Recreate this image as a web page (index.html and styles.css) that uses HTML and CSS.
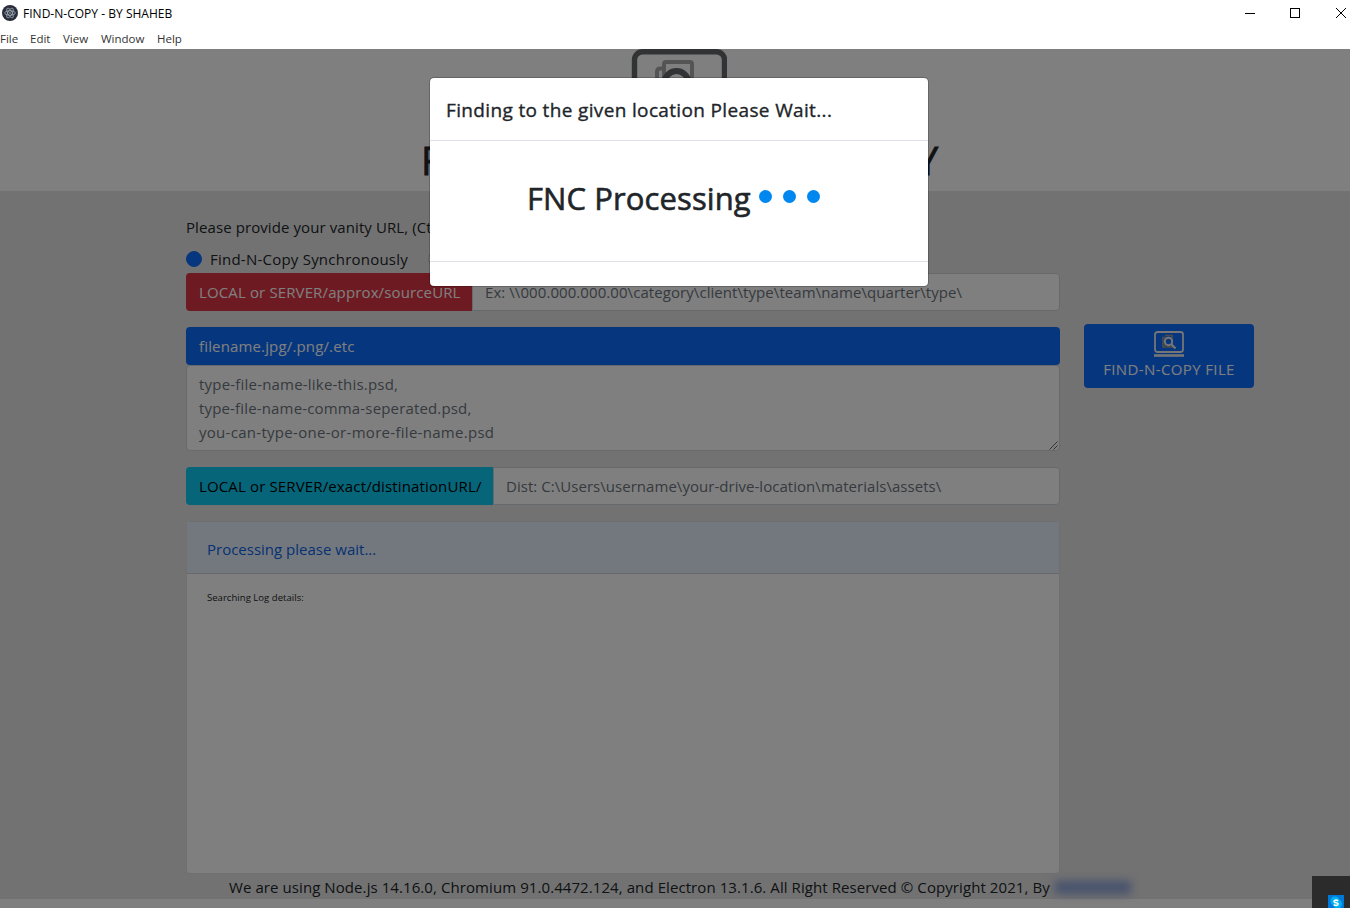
FILE: index.html
```html
<!DOCTYPE html>
<html lang="en">
<head>
<meta charset="utf-8">
<title>FIND-N-COPY - BY SHAHEB</title>
<link rel="stylesheet" href="styles.css">
</head>
<body>
<div class="window">
  <header class="titlebar">
    <svg class="app-icon" width="16" height="16" viewBox="0 0 16 16">
      <circle cx="8" cy="8" r="8" fill="#2b2e3a"/>
      <g fill="none" stroke="#c3d3dc" stroke-width=".7" opacity=".85">
        <ellipse cx="8" cy="8" rx="5.4" ry="2.2"/>
        <ellipse cx="8" cy="8" rx="5.4" ry="2.2" transform="rotate(60 8 8)"/>
        <ellipse cx="8" cy="8" rx="5.4" ry="2.2" transform="rotate(120 8 8)"/>
      </g>
      <circle cx="8" cy="8" r=".7" fill="#c3d3dc"/>
    </svg>
    <span class="app-name">FIND-N-COPY - BY SHAHEB</span>
    <svg class="controls" width="105" height="13" viewBox="0 0 105 13" fill="none" stroke="#000">
      <path d="M0 6.5H10" shape-rendering="crispEdges"/>
      <path d="M45.500 1.500H54.500V10.500H45.500Z" shape-rendering="crispEdges"/>
      <path d="M91 1L101 11M101 1L91 11"/>
    </svg>
  </header>
  <nav class="menubar"><span class="m-file">File</span><span class="m-edit">Edit</span><span class="m-view">View</span><span class="m-window">Window</span><span>Help</span></nav>

  <div class="page">
    <section class="hero">
      <svg class="logo" width="96" height="84" viewBox="0 0 96 84" fill="none">
        <rect x="3.500" y="2.700" width="90" height="64" rx="8" stroke="#63666a" stroke-width="5.400"/>
        <rect x="33" y="13" width="28" height="36" rx="2" stroke="#a9a9a9" stroke-width="4"/>
        <path d="M33 19.500H29Q26 19.500 26 23V55H50" stroke="#a9a9a9" stroke-width="4"/>
        <circle cx="45.500" cy="34" r="12" fill="#fff" stroke="#63666a" stroke-width="6"/>
        <path d="M55 44L68 57M0 79H96" stroke="#63666a" stroke-width="6"/>
      </svg>
      <h1 class="hero-title">FIND-N-COPY</h1>
    </section>

    <main class="workspace">
      <div class="form">
        <p class="lead">Please provide your vanity URL, (Ctrl + V)</p>
        <div class="modes">
          <span class="radio radio-on"></span><span class="mode-name">Find-N-Copy Synchronously</span>
          <span class="radio"></span><span class="mode-name">Find-N-Copy Asynchronously</span>
        </div>
        <div class="group">
          <span class="tag tag-red"><span class="t-src">LOCAL or SERVER/approx/sourceURL</span></span>
          <span class="field"><span class="t-ex">Ex: \\000.000.000.00\category\client\type\team\name\quarter\type\</span></span>
        </div>
        <div class="files">
          <div class="tag tag-blue"><span class="t-fn">filename.jpg/.png/.etc</span></div>
          <div class="area">
            <span class="t-a1">type-file-name-like-this.psd,</span>
            <span class="t-a2">type-file-name-comma-seperated.psd,</span>
            <span class="t-a3">you-can-type-one-or-more-file-name.psd</span>
            <svg class="grip" width="9" height="9" viewBox="0 0 9 9" stroke="#555" stroke-width=".9"><path d="M.5 8.500L8.500 .5M4.500 8.500L8.500 4.500"/></svg>
          </div>
        </div>
        <div class="group group-dest">
          <span class="tag tag-cyan"><span class="t-dst">LOCAL or SERVER/exact/distinationURL/</span></span>
          <span class="field"><span class="t-dist">Dist: C:\Users\username\your-drive-location\materials\assets\</span></span>
        </div>
        <div class="log">
          <div class="log-head"><span class="t-proc">Processing please wait...</span></div>
          <div class="log-body"><span class="t-log">Searching Log details:</span></div>
        </div>
      </div>
      <div class="action">
        <svg width="30" height="26" viewBox="0 0 30 26" fill="none" stroke="#ececec">
          <rect x="1" y="1" width="28" height="20" rx="2.500" stroke-width="1.800"/>
          <path d="M0 24.500H30" stroke-width="2.600"/>
          <path d="M11 4.500H18V16H9V6.500H11V15" stroke="#999" stroke-width="1.600"/>
          <circle cx="14.500" cy="10.500" r="3.700" stroke-width="1.900"/>
          <path d="M17.300 13.300L21.500 17.500" stroke-width="2.200"/>
        </svg>
        <span class="t-act">FIND-N-COPY FILE</span>
      </div>
    </main>
    <footer class="foot"><span class="t-foot">We are using Node.js 14.16.0, Chromium 91.0.4472.124, and Electron 13.1.6. All Right Reserved © Copyright 2021, By</span><span class="author"></span></footer>

    <div class="backdrop">
      <div class="modal">
        <div class="modal-head"><span class="t-mh">Finding to the given location Please Wait...</span></div>
        <div class="modal-body">
          <span class="t-fnc">FNC Processing</span>
          <span class="dots"><i></i><i></i><i></i></span>
        </div>
        <div class="modal-foot"></div>
      </div>
    </div>
    <div class="tray">
      <svg width="16" height="13" viewBox="0 0 16 13"><rect width="16" height="13" fill="#0078d7"/><circle cx="7" cy="6" r="4.500" fill="#00aff0"/><circle cx="9.500" cy="9" r="4.500" fill="#00aff0"/><path d="M10.300 5.700Q8 4.500 6.400 5.600Q5.300 7.300 8 7.700Q11 8.200 9.800 9.900Q8 11 5.700 9.700" fill="none" stroke="#fff" stroke-width="1.600"/></svg>
    </div>
  </div>
</div>
</body>
</html>
```
FILE: styles.css
```css
* { box-sizing: border-box; }
body { margin: 0; background: #fff; color: #212529; font: 15px/24px "Open Sans", "Noto Sans", sans-serif; overflow: hidden; }
span { white-space: nowrap; }
.window { width: 1350px; height: 908px; display: flex; flex-direction: column; }
.titlebar { height: 27px; display: flex; align-items: center; padding: 0 0 1px 2px; color: #000; }
.app-name { margin-left: 5px; padding-top: 1px; font-size: 12px; letter-spacing: 0.02px; }
.controls { margin-left: auto; }
.menubar { height: 22px; display: flex; align-items: center; gap: 12px; padding-top: 2px; font-size: 11.5px; color: #333; }
.m-file { width: 18px; }
.m-edit { width: 21px; }
.m-view { width: 26px; }
.m-window { width: 44px; }

.page { position: relative; flex: 1; display: flex; flex-direction: column; }
.hero { height: 142px; display: flex; flex-direction: column; align-items: center; padding-left: 8px; overflow: hidden; }
.logo { flex: none; }
.hero-title { margin: 3px 0 0; width: 516px; font-size: 38.5px; line-height: 48px; font-weight: 500; letter-spacing: 27.7px; white-space: nowrap; -webkit-text-stroke: .8px currentColor; }
.workspace { height: 683px; background: #e4e4e4; display: flex; gap: 24px; padding: 24px 0 0 186px; }
.form { width: 874px; display: flex; flex-direction: column; }
.lead { margin: 0; height: 32px; letter-spacing: .09px; }
.modes { height: 26px; display: flex; align-items: center; padding-bottom: 2px; }
.radio { width: 16px; height: 16px; border-radius: 50%; border: 1px solid #bfbfbf; background: #fff; margin-right: 8px; flex: none; }
.radio-on { background: #0d6efd; border-color: #0d6efd; }
.mode-name { width: 218px; height: 24px; letter-spacing: .23px; }
.group { display: flex; height: 38px; }
.tag { height: 38px; padding: 7px 13px; border-radius: 4px; color: #fff; }
.group .tag { border-radius: 4px 0 0 4px; }
.tag-red { width: 286px; background: #dc3545; }
.tag-blue { background: #0d6efd; }
.tag-cyan { width: 307px; background: #0dcaf0; color: #000; }
.field { flex: 1; border: 1px solid #ced4da; background: #fff; border-radius: 0 4px 4px 0; padding: 6px 12px; color: #6c757d; }
.t-src { letter-spacing: .13px; }
.t-ex { letter-spacing: .07px; }
.t-fn { letter-spacing: .15px; }
.t-a1 { letter-spacing: .2px; }
.t-a2 { letter-spacing: .16px; }
.t-a3 { letter-spacing: .29px; }
.t-dst { letter-spacing: .14px; }
.t-dist { letter-spacing: .04px; }
.t-act { letter-spacing: .38px; }
.t-foot { letter-spacing: .08px; }
.t-log { letter-spacing: .04px; }
.files { margin: 16px 0; }
.area { position: relative; height: 86px; background: #fff; border: 1px solid #ced4da; border-radius: 4px; padding: 6px 12px; color: #6c757d; display: flex; flex-direction: column; align-items: flex-start; }
.grip { position: absolute; right: 1px; bottom: 0; }
.log { margin-top: 16px; height: 354px; border: 1px solid #dfdfdf; border-radius: 4px; background: #fff; }
.log-head { height: 52px; background: #e7f1ff; border-bottom: 1px solid #ced4da; padding: 15px 20px; color: #0c63e4; }
.log-body { padding: 12px 20px; font-size: 9.5px; }
.action { width: 170px; height: 64px; margin-top: 109px; border-radius: 4px; background: #0d6efd; color: #fff; display: flex; flex-direction: column; align-items: center; padding-top: 7px; }
.foot { height: 25px; background: #e4e4e4; padding-left: 229px; display: flex; align-items: center; }
.author { width: 76px; height: 13px; margin: 2px 0 0 5px; background: #8ba2d8; filter: blur(5px); }

.backdrop { position: absolute; inset: 0; background: rgba(0,0,0,.5); display: flex; justify-content: center; align-items: flex-start; padding: 28px 0 0 8px; }
.modal { width: 500px; height: 210px; border: 1px solid rgba(0,0,0,.2); border-radius: 5px; background: #fff; background-clip: padding-box; }
.modal-head { height: 63px; border-bottom: 1px solid #dee2e6; padding: 17px 16px; line-height: 30px; font-size: 19px; font-weight: 500; }
.t-mh { letter-spacing: .35px; -webkit-text-stroke: .35px currentColor; }
.modal-body { height: 120px; padding: 38px 0 0 97px; display: flex; font-size: 31px; font-weight: 500; line-height: 38px; }
.t-fnc { letter-spacing: .1px; -webkit-text-stroke: .6px currentColor; }
.dots { display: flex; gap: 11px; margin: 11px 0 0 8px; }
.dots i { width: 13px; height: 13px; border-radius: 50%; background: #0087f0; }
.modal-foot { height: 25px; border-top: 1px solid #dee2e6; }
.tray { position: absolute; right: 0; bottom: 0; width: 38px; height: 32px; background: #2b2b2b; display: flex; align-items: flex-end; padding-left: 16px; }
```
